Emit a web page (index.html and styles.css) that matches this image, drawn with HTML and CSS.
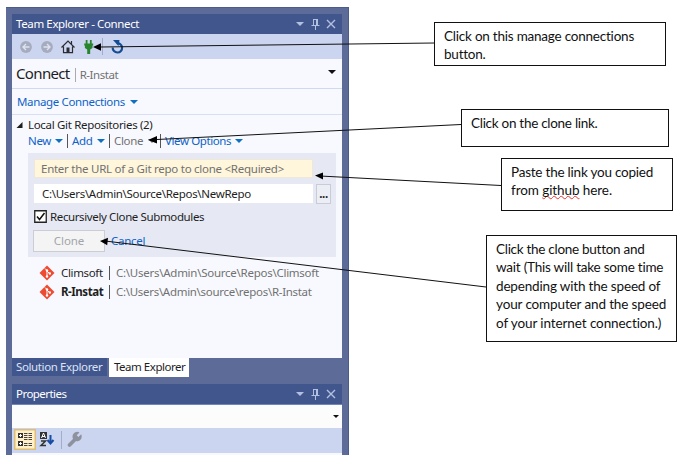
FILE: index.html
```html
<!DOCTYPE html>
<html lang="en">
<head>
<meta charset="utf-8">
<title>Team Explorer - Connect</title>
<link rel="stylesheet" href="styles.css">
</head>
<body>
<main class="dock">
  <section class="window team">
    <header class="titlebar"><span class="t-title">Team Explorer - Connect</span>
      <svg class="winctl" width="44" height="14" viewBox="0 0 44 14"><path d="M1 5h8L5 9z" fill="#b3c0e2"/><path d="M18.500 2v7M22.500 2v7M18 2.500h5M16.500 8.500h8M20.500 9v4M21.500 3v5" fill="none" stroke="#b3c0e2"/><path d="M32 3l8 8M40 3l-8 8" stroke="#b3c0e2" stroke-width="1.400"/></svg>
    </header>
    <nav class="toolbar">
      <svg width="120" height="25" viewBox="0 0 120 25"><g fill="#a6acbd"><circle cx="14" cy="13" r="5.900"/><circle cx="35" cy="13" r="5.900"/></g><path d="M17.500 13h-6M14 10l-3 3 3 3M31.500 13h6M35 10l3 3-3 3" fill="none" stroke="#dce2f2" stroke-width="1.400"/><path d="M49.500 13.500L56 7l6.500 6.500M51.500 12.500v6.200h9v-6.200M59.500 10V7" fill="none" stroke="#2c2c30" stroke-width="1.200"/><path d="M54.500 18v-4.500h3V18z" fill="#2c2c30"/><path d="M74 6h1.800v3.500h2.400V6H80v3.500h1.500v2h-.7V14l-2.300 1.500V20h-3v-4.500L73.200 14v-2.500h-.7v-2H74z" transform="translate(-.3)" fill="#28852e"/><path d="M90.500 4v17" stroke="#9eacce"/><path d="M104.500 9.200a4.700 4.700 0 1 1-3.800 4.300" fill="none" stroke="#144d93" stroke-width="2.200"/><path d="M101 6h6.500l-1 6z" fill="#144d93"/></svg>
    </nav>
    <div class="page-head"><span class="page-name">Connect</span><i class="bar head-bar"></i><span class="project">R-Instat</span><i class="caret black end"></i></div>
    <div class="manage"><span class="t-manage">Manage Connections</span><i class="caret"></i></div>
    <div class="content">
      <div class="group"><svg width="8" height="8" viewBox="0 0 8 8"><path d="M6.500 1v6h-6z" fill="#1e1e1e"/></svg><span class="t-local">Local Git Repositories (2)</span></div>
      <div class="links"><span class="l-new">New</span><i class="caret"></i><i class="bar"></i><span class="l-add">Add</span><i class="caret"></i><i class="bar"></i><span class="l-clone">Clone</span><i class="caret grey"></i><i class="bar"></i><span class="l-view">View Options</span><i class="caret"></i></div>
      <form class="clone-form">
        <div class="field url"><span class="t-url">Enter the URL of a Git repo to clone &lt;Required&gt;</span></div>
        <div class="path-row"><div class="field"><span class="t-path">C:\Users\Admin\Source\Repos\NewRepo</span></div><div class="browse">...</div></div>
        <div class="check"><svg width="13" height="13" viewBox="0 0 13 13"><path d="M.75.75h11.500v11.500H.75z" fill="#fff" stroke="#222" stroke-width="1.300"/><path d="M3 6.500l2.500 3L10.500 3" fill="none" stroke="#111" stroke-width="1.500"/></svg><span class="t-rec">Recursively Clone Submodules</span></div>
        <div class="actions"><div class="clone-btn">Clone</div><span class="t-cancel">Cancel</span></div>
      </form>
      <div class="repo"><svg width="16" height="16" viewBox="0 0 16 16"><path d="M8 .5L15.500 8 8 15.500.5 8z" fill="#ed4b32"/><path d="M6 3.500l2 2v6M8 6l3 3" stroke="#fff" fill="none"/><g fill="#fff"><circle cx="8" cy="5.500" r="1.200"/><circle cx="8" cy="11.500" r="1.200"/><circle cx="10.800" cy="8.500" r="1.200"/></g></svg><span class="name t-clim">Climsoft</span><i class="bar"></i><span class="where w-clim">C:\Users\Admin\Source\Repos\Climsoft</span></div>
      <div class="repo"><svg width="16" height="16" viewBox="0 0 16 16"><path d="M8 .5L15.500 8 8 15.500.5 8z" fill="#ed4b32"/><path d="M6 3.500l2 2v6M8 6l3 3" stroke="#fff" fill="none"/><g fill="#fff"><circle cx="8" cy="5.500" r="1.200"/><circle cx="8" cy="11.500" r="1.200"/><circle cx="10.800" cy="8.500" r="1.200"/></g></svg><span class="name strong">R-Instat</span><i class="bar"></i><span class="where w-rin">C:\Users\Admin\source\repos\R-Instat</span></div>
    </div>
  </section>
  <div class="tabs"><div class="tab">Solution Explorer</div><div class="tab active">Team Explorer</div></div>
  <section class="window props">
    <header class="titlebar"><span class="t-props">Properties</span>
      <svg class="winctl" width="44" height="14" viewBox="0 0 44 14"><path d="M1 5h8L5 9z" fill="#b3c0e2"/><path d="M18.500 2v7M22.500 2v7M18 2.500h5M16.500 8.500h8M20.500 9v4M21.500 3v5" fill="none" stroke="#b3c0e2"/><path d="M32 3l8 8M40 3l-8 8" stroke="#b3c0e2" stroke-width="1.400"/></svg>
    </header>
    <div class="selector"><i class="caret black small"></i></div>
    <nav class="prop-tools">
      <svg width="80" height="25" viewBox="0 0 80 25"><path d="M2.750 1.750h20.500v19.500H2.750z" fill="#fff0c8" stroke="#dfbd78" stroke-width="1.500"/><path d="M6 5h5v5H6zM6 13h5v5H6z" fill="#333"/><path d="M7 7.500h3M8.500 6v3M7 15.500h3M8.500 14v3" stroke="#fff"/><path d="M12 5.500h8M12 7.500h8M12 9.500h8M12 11.500h8M12 15.500h8M12 17.500h8" stroke="#444" stroke-dasharray="3.500 1"/><path d="M28 4h7v7h-7z" fill="#333"/><path d="M29.500 10l2-5 2 5M30 8.500h3" stroke="#fff" fill="none"/><path d="M29 13h4.500L29 17.500h5" stroke="#333" stroke-width="1.500" fill="none"/><path d="M38.500 7v8M35.500 12l3 3.500 3-3.500" stroke="#154da4" stroke-width="2" fill="none"/><path d="M49.500 3v18" stroke="#a1aecb"/><path d="M57.500 17l6.500-6.500" stroke="#8d929e" stroke-width="3.800" stroke-linecap="round"/><path d="M67.500 4.500l-2.800 2.800 1.700 1.700 2.800-2.800a4.700 4.700 0 1 1-1.700-1.700z" fill="#8d929e"/></svg>
    </nav>
  </section>
</main>
<svg class="arrows" width="683" height="458" viewBox="0 0 683 458"><path d="M100 47L434 43M153 139.700L461 124.500M320 176L501 185.500M105 241L486 287" stroke="#111" fill="none"/><path d="M93 47l8-3.700v7.400zM148 140l9-4v7.500zM315 175.500l8-3v7zM100 241l8-3.200-.8 7.400z" fill="#000"/></svg>
<aside class="note n1"><div class="c1">Click on this manage connections</div><div class="c2">button.</div></aside>
<aside class="note n2"><div class="c3">Click on the clone link.</div></aside>
<aside class="note n3"><div class="c4">Paste the link you copied</div><div class="c5">from <span class="typo">github</span> here.</div></aside>
<aside class="note n4"><div class="c6">Click the clone button and</div><div class="c7">wait (This will take some time</div><div class="c8">depending with the speed of</div><div class="c9">your computer and the speed</div><div class="c10">of your internet connection.)</div></aside>
</body>
</html>
```
FILE: styles.css
```css
* { box-sizing: border-box; }
body { margin: 0; width: 683px; height: 458px; overflow: hidden; background: #fff; font: 11.5px/16px "Noto Sans", sans-serif; letter-spacing: -.35px; color: #1e1e1e; }
span, .tab, .note div { white-space: nowrap; }
.dock { margin: 7px 0 0 6px; width: 343px; height: 448px; padding: 6px 6px 0; background: #5d6b99; border: solid #4c5b8b; border-width: 1px 1px 0 0; }
.window { width: 330px; background: #f8f9fe; }
.team { height: 344px; }
.titlebar { height: 20px; background: #41568d; color: #fff; display: flex; align-items: center; padding: 0 3px 0 4px; justify-content: space-between; }
.t-title { letter-spacing: -.38px; }
.t-props { letter-spacing: -.55px; }
.toolbar { height: 25px; background: #ccd5f0; }
.toolbar svg, .prop-tools svg { display: block; }
.page-head { height: 30px; display: flex; align-items: center; padding: 0 6px 0 4px; border-bottom: 1px solid #cfd9f0; }
.page-name { font-size: 15px; letter-spacing: -.65px; margin-top: -1px; }
.bar { width: 1px; height: 14px; background: #555; flex: none; }
.head-bar { margin: 2px 4px 0 5px; background: #aaa; }
.project { color: #717171; margin-top: 2px; letter-spacing: -.45px; }
.caret { width: 0; height: 0; border: 4px solid transparent; border-bottom: 0; border-top-color: #0e70c0; flex: none; }
.black { border-top-color: #111; }
.grey { border-top-color: #717171; }
.end { margin-left: auto; margin-bottom: 3px; }
.small { border-width: 3px 3px 0; }
.manage { height: 26px; display: flex; align-items: center; gap: 5px; padding-left: 5px; color: #0e62c7; border-bottom: 1px solid #d7dff2; }
.group { display: flex; align-items: center; height: 15px; margin-top: 2px; margin-bottom: 1px; padding-left: 4px; gap: 4px; }
.t-local { letter-spacing: -.32px; }
.links { display: flex; align-items: center; height: 15px; padding-left: 16px; color: #0e62c7; }
.links .caret { margin: 0 4px; }
.links .bar { margin-right: 4px; }
.l-new { width: 23px; }
.l-add { width: 21px; }
.l-clone { width: 30px; color: #717171; }
.l-view { letter-spacing: -.4px; }
.clone-form { margin: 5px 0 0 16px; width: 308px; height: 104px; background: #e6e9f3; padding: 6px 5px 0 6px; }
.field { width: 279px; height: 19px; background: #fff; display: flex; align-items: center; padding-left: 8px; }
.url { background: #fff6db; color: #717171; border: 1px solid #eee8d9; padding-left: 6px; }
.t-url { letter-spacing: -.26px; }
.t-path { letter-spacing: -.3px; }
.path-row { margin-top: 6px; display: flex; gap: 3px; }
.browse { width: 15px; height: 20px; border: 1px solid #c9ccd7; background: #eceef6; text-align: center; font-weight: bold; line-height: 17px; }
.check { margin-top: 6px; height: 13px; display: flex; align-items: center; gap: 3px; }
.t-rec { letter-spacing: -.38px; }
.actions { margin: 7px 0 0 -1px; display: flex; align-items: center; gap: 6px; color: #0e62c7; }
.clone-btn { width: 72px; height: 22px; border: 1px solid #cbcdd4; background: #f4f4f5; color: #a2a4a9; text-align: center; line-height: 20px; letter-spacing: -.1px; }
.t-cancel { letter-spacing: -.25px; }
.repo { display: flex; align-items: center; height: 19px; padding-left: 27px; }
.clone-form + .repo { margin-top: 6px; }
.name { width: 48px; margin-left: 6px; }
.strong { font-weight: bold; letter-spacing: -.45px; }
.where { color: #717171; margin-left: 6px; }
.w-clim { letter-spacing: -.26px; }
.w-rin { letter-spacing: -.3px; }
.tabs { display: flex; gap: 2px; height: 26px; }
.tab { width: 95px; height: 18px; padding-left: 4px; background: #41568d; color: #dce3f6; line-height: 18px; letter-spacing: -.38px; }
.active { width: 80px; height: 19px; padding-left: 5px; background: #fff; color: #1e1e1e; letter-spacing: -.48px; }
.selector { height: 24px; border-top: 1px solid #7385b2; background: #fcfcfd; display: flex; align-items: center; justify-content: flex-end; padding-right: 3px; }
.prop-tools { height: 25px; background: #ccd5f0; }
.props { height: 71px; }
.arrows { position: absolute; left: 0; top: 0; }
.note { position: absolute; border: 1px solid #111; background: #fff; font: 13.5px/18.400px Lato, sans-serif; letter-spacing: -.22px; color: #111; padding: 4px 0 0 9px; }
.n1 { left: 434px; top: 22px; width: 232px; height: 44px; }
.n2 { left: 461px; top: 109px; width: 208px; height: 38px; padding-top: 4px; }
.n3 { left: 501px; top: 158px; width: 172px; height: 53px; }
.n4 { left: 486px; top: 235px; width: 191px; height: 107px; }
.c3, .c6 { letter-spacing: -.28px; }
.c5 { letter-spacing: -.08px; }
.c8 { letter-spacing: -.17px; }
.c9 { letter-spacing: -.13px; }
.c10 { letter-spacing: -.1px; }
.typo { text-decoration: underline wavy #e33 1px; text-underline-offset: 0; text-decoration-skip-ink: none; }
```
